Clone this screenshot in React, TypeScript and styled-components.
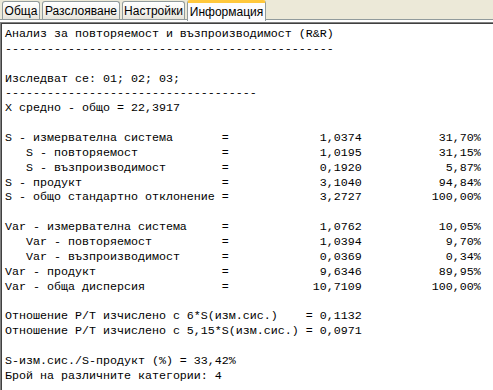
import styled, { createGlobalStyle } from "styled-components";

const row = (label: string, value: string, pct: string) =>
  label.padEnd(31) + "= " + value.padStart(18) + pct.padStart(17);

const lines: string[] = [
  "Анализ за повторяемост и възпроизводимост (R&R)",
  "-".repeat(47),
  "",
  "Изследват се: 01; 02; 03;",
  "-".repeat(36),
  "X средно - общо = 22,3917",
  "",
  row("S - измервателна система", "1,0374", "31,70%"),
  row("   S - повторяемост", "1,0195", "31,15%"),
  row("   S - възпроизводимост", "0,1920", "5,87%"),
  row("S - продукт", "3,1040", "94,84%"),
  row("S - общо стандартно отклонение", "3,2727", "100,00%"),
  "",
  row("Var - измервателна система", "1,0762", "10,05%"),
  row("   Var - повторяемост", "1,0394", "9,70%"),
  row("   Var - възпроизводимост", "0,0369", "0,34%"),
  row("Var - продукт", "9,6346", "89,95%"),
  row("Var - обща дисперсия", "10,7109", "100,00%"),
  "",
  "Отношение P/T изчислено с 6*S(изм.сис.)".padEnd(42) + " = 0,1132",
  "Отношение P/T изчислено с 5,15*S(изм.сис.)".padEnd(42) + " = 0,0971",
  "",
  "S-изм.сис./S-продукт (%) = 33,42%",
  "Брой на различните категории: 4",
];

const tabs = ["Обща", "Разслояване", "Настройки", "Информация"];
const tabWidths = [38, 78, 63, 79];

function App() {
  return (
    <Window>
      <GlobalStyles />
      <TabStrip>
        {tabs.map((t, i) => (
          <Tab key={t} $active={i === 3} style={{ width: tabWidths[i] }}>
            {t}
          </Tab>
        ))}
      </TabStrip>
      <Sheet>
        <Memo>
          {lines.map((l, i) => (
            <Line key={i}>{l || "\u00a0"}</Line>
          ))}
        </Memo>
      </Sheet>
    </Window>
  );
}

export default App;

const GlobalStyles = createGlobalStyle`
  * {
    box-sizing: border-box;
  }
  html, body {
    margin: 0;
    padding: 0;
    width: 493px;
    height: 390px;
    overflow: hidden;
    background: #ffffff;
  }
`;

const Window = styled.div`
  display: flex;
  flex-direction: column;
  width: 493px;
  height: 390px;
  background: #ffffff;
`;

const TabStrip = styled.div`
  display: flex;
  align-items: flex-end;
  height: 20px;
  padding-left: 2px;
  gap: 2px;
  background: #ece9d8;
  border-bottom: 1px solid #919b9c;
`;

const Tab = styled.div<{ $active?: boolean }>`
  display: flex;
  align-items: center;
  justify-content: center;
  flex-shrink: 0;
  height: ${(p) => (p.$active ? "21px" : "18px")};
  margin-bottom: ${(p) => (p.$active ? "-2px" : "0")};
  padding-top: ${(p) => (p.$active ? "0" : "1px")};
  border: 1px solid #919b9c;
  border-bottom: none;
  border-top: ${(p) => (p.$active ? "3px solid #ffc83c" : "1px solid #919b9c")};
  border-radius: 3px 3px 0 0;
  background: ${(p) =>
    p.$active ? "#fcfcfe" : "linear-gradient(#ffffff, #f3f3ef 60%, #e6e4da)"};
  color: #000000;
  font-family: "Liberation Sans", Arial, sans-serif;
  font-size: 12px;
  position: relative;
  z-index: ${(p) => (p.$active ? 1 : 0)};
`;

const Sheet = styled.div`
  flex: 1;
  padding-top: 2px;
  background: #ffffff;
  overflow: hidden;
`;

const Memo = styled.div`
  height: 100%;
  border-top: 1px solid #808080;
  border-left: 1px solid #808080;
  box-shadow: inset 1px 1px 0 #404040;
  padding: 4px 0 0 4px;
  font-family: "Liberation Mono", "Courier New", monospace;
  font-size: 11.67px;
  line-height: 14.87px;
  color: #000000;
  white-space: pre;
`;

const Line = styled.div`
  height: 14.87px;
`;
